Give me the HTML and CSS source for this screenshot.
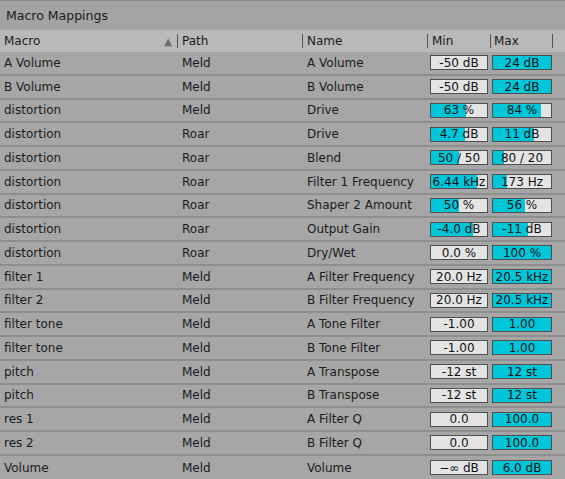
FILE: index.html
```html
<!DOCTYPE html>
<html>
<head>
<meta charset="utf-8">
<link rel="stylesheet" href="styles.css">
</head>
<body>
<div class="panel">
  <div class="title">Macro Mappings</div>
  <div class="row head">
    <div class="cell c-macro">Macro<span class="sort">▲</span></div>
    <div class="cell c-path sep">Path</div>
    <div class="cell c-name sep">Name</div>
    <div class="cell c-min sep">Min</div>
    <div class="cell c-max sep">Max</div>
    <div class="cell c-end sep"></div>
  </div>
  <div class="rows">
    <div class="row"><div class="cell c-macro">A Volume</div><div class="cell c-path">Meld</div><div class="cell c-name">A Volume</div><div class="cell c-min"><span class="box" style="--v:0%">-50 dB</span></div><div class="cell c-max"><span class="box" style="--v:100%">24 dB</span></div></div>
    <div class="row"><div class="cell c-macro">B Volume</div><div class="cell c-path">Meld</div><div class="cell c-name">B Volume</div><div class="cell c-min"><span class="box" style="--v:0%">-50 dB</span></div><div class="cell c-max"><span class="box" style="--v:100%">24 dB</span></div></div>
    <div class="row"><div class="cell c-macro">distortion</div><div class="cell c-path">Meld</div><div class="cell c-name">Drive</div><div class="cell c-min"><span class="box" style="--v:63%">63 %</span></div><div class="cell c-max"><span class="box" style="--v:82%">84 %</span></div></div>
    <div class="row"><div class="cell c-macro">distortion</div><div class="cell c-path">Roar</div><div class="cell c-name">Drive</div><div class="cell c-min"><span class="box" style="--v:61%">4.7 dB</span></div><div class="cell c-max"><span class="box" style="--v:70%">11 dB</span></div></div>
    <div class="row"><div class="cell c-macro">distortion</div><div class="cell c-path">Roar</div><div class="cell c-name">Blend</div><div class="cell c-min"><span class="box" style="--v:50%">50 / 50</span></div><div class="cell c-max"><span class="box" style="--v:19%">80 / 20</span></div></div>
    <div class="row"><div class="cell c-macro">distortion</div><div class="cell c-path">Roar</div><div class="cell c-name">Filter 1 Frequency</div><div class="cell c-min"><span class="box" style="--v:83%">6.44 kHz</span></div><div class="cell c-max"><span class="box" style="--v:24%">173 Hz</span></div></div>
    <div class="row"><div class="cell c-macro">distortion</div><div class="cell c-path">Roar</div><div class="cell c-name">Shaper 2 Amount</div><div class="cell c-min"><span class="box" style="--v:50%">50 %</span></div><div class="cell c-max"><span class="box" style="--v:56%">56 %</span></div></div>
    <div class="row"><div class="cell c-macro">distortion</div><div class="cell c-path">Roar</div><div class="cell c-name">Output Gain</div><div class="cell c-min"><span class="box" style="--v:75%">-4.0 dB</span></div><div class="cell c-max"><span class="box" style="--v:61%">-11 dB</span></div></div>
    <div class="row"><div class="cell c-macro">distortion</div><div class="cell c-path">Roar</div><div class="cell c-name">Dry/Wet</div><div class="cell c-min"><span class="box" style="--v:0%">0.0 %</span></div><div class="cell c-max"><span class="box" style="--v:100%">100 %</span></div></div>
    <div class="row"><div class="cell c-macro">filter 1</div><div class="cell c-path">Meld</div><div class="cell c-name">A Filter Frequency</div><div class="cell c-min"><span class="box" style="--v:0%">20.0 Hz</span></div><div class="cell c-max"><span class="box" style="--v:100%">20.5 kHz</span></div></div>
    <div class="row"><div class="cell c-macro">filter 2</div><div class="cell c-path">Meld</div><div class="cell c-name">B Filter Frequency</div><div class="cell c-min"><span class="box" style="--v:0%">20.0 Hz</span></div><div class="cell c-max"><span class="box" style="--v:100%">20.5 kHz</span></div></div>
    <div class="row"><div class="cell c-macro">filter tone</div><div class="cell c-path">Meld</div><div class="cell c-name">A Tone Filter</div><div class="cell c-min"><span class="box" style="--v:0%">-1.00</span></div><div class="cell c-max"><span class="box" style="--v:100%">1.00</span></div></div>
    <div class="row"><div class="cell c-macro">filter tone</div><div class="cell c-path">Meld</div><div class="cell c-name">B Tone Filter</div><div class="cell c-min"><span class="box" style="--v:0%">-1.00</span></div><div class="cell c-max"><span class="box" style="--v:100%">1.00</span></div></div>
    <div class="row"><div class="cell c-macro">pitch</div><div class="cell c-path">Meld</div><div class="cell c-name">A Transpose</div><div class="cell c-min"><span class="box" style="--v:0%">-12 st</span></div><div class="cell c-max"><span class="box" style="--v:100%">12 st</span></div></div>
    <div class="row"><div class="cell c-macro">pitch</div><div class="cell c-path">Meld</div><div class="cell c-name">B Transpose</div><div class="cell c-min"><span class="box" style="--v:0%">-12 st</span></div><div class="cell c-max"><span class="box" style="--v:100%">12 st</span></div></div>
    <div class="row"><div class="cell c-macro">res 1</div><div class="cell c-path">Meld</div><div class="cell c-name">A Filter Q</div><div class="cell c-min"><span class="box" style="--v:0%">0.0</span></div><div class="cell c-max"><span class="box" style="--v:100%">100.0</span></div></div>
    <div class="row"><div class="cell c-macro">res 2</div><div class="cell c-path">Meld</div><div class="cell c-name">B Filter Q</div><div class="cell c-min"><span class="box" style="--v:0%">0.0</span></div><div class="cell c-max"><span class="box" style="--v:100%">100.0</span></div></div>
    <div class="row last"><div class="cell c-macro">Volume</div><div class="cell c-path">Meld</div><div class="cell c-name">Volume</div><div class="cell c-min"><span class="box" style="--v:0%">−∞ dB</span></div><div class="cell c-max"><span class="box" style="--v:100%">6.0 dB</span></div></div>
  </div>
</div>
</body>
</html>
```
FILE: styles.css
```css
html, body {
  margin: 0;
  padding: 0;
  background: #a6a6a6;
}
.panel {
  width: 565px;
  height: 479px;
  overflow: hidden;
  font-family: "DejaVu Sans", "Open Sans", sans-serif;
  font-size: 12px;
  color: #1b1b1b;
  background: #a6a6a6;
}
.title {
  height: 29px;
  border-top: 1px solid #8a8a8a;
  background: #a3a3a3;
  display: flex;
  align-items: center;
  padding-left: 6px;
  font-size: 12.5px;
}
.row {
  display: grid;
  grid-template-columns: 177px 125px 125px 63px 62px 13px;
  align-items: center;
  height: 23.76px;
  box-sizing: border-box;
  border-bottom: 2px solid #8e8e8e;
}
.row.last {
  border-bottom: none;
}
.row.head {
  height: 22px;
  background: #b9b9b9;
  border-bottom: none;
}
.cell {
  white-space: nowrap;
  overflow: hidden;
  display: flex;
  align-items: center;
  height: 100%;
}
.c-macro { padding-left: 4px; }
.c-path, .c-name { padding-left: 5px; }
.c-min { padding-left: 3px; }
.c-max { padding-left: 2px; }
.head .c-min { padding-left: 5px; }
.head .c-max { padding-left: 4px; }
.head .cell { position: relative; }
.head .sep::before {
  content: "";
  position: absolute;
  left: 0;
  top: 4px;
  bottom: 4px;
  width: 1px;
  background: #555;
}
.sort {
  margin-left: auto;
  margin-right: 5px;
  font-size: 10px;
  color: #6e6e6e;
}
.box {
  display: flex;
  align-items: center;
  justify-content: center;
  box-sizing: border-box;
  height: 15px;
  border: 1px solid #4f4f4f;
  background: linear-gradient(to right, #00c6da var(--v), #e4e4e4 var(--v));
  color: #111;
  font-size: 12px;
}
.c-min .box { width: 58px; }
.c-max .box { width: 60px; }
```
